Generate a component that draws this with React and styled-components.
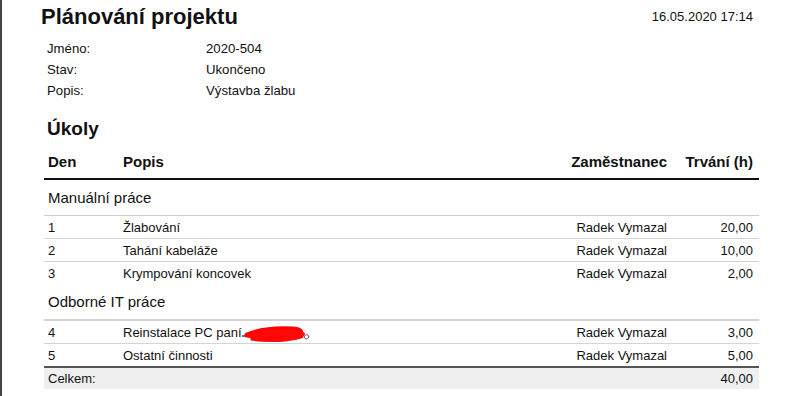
import React from 'react';
import styled, { createGlobalStyle } from 'styled-components';

const GlobalStyle = createGlobalStyle`
  html, body {
    margin: 0;
    padding: 0;
    background: #ffffff;
  }
  body {
    font-family: "Liberation Sans", Arial, sans-serif;
    color: #111111;
  }
`;

export const Sheet = styled.div`
  min-height: 396px;
  border-left: 2px solid #444444;
  box-sizing: border-box;
  width: 792px;
`;

export const Content = styled.div`
  width: 715px;
  margin-left: 42px;
`;

export const Header = styled.div`
  display: flex;
  justify-content: space-between;
  align-items: flex-start;
  padding-top: 3px;
  line-height: 28px;
`;

export const Titulo = styled.h1`
  margin: 0 0 0 -3px;
  font-size: 22px;
  font-weight: bold;
  line-height: 28px;
`;

export const Datum = styled.div`
  font-size: 13px;
  padding-right: 6px;
`;

export const Info = styled.div`
  display: grid;
  grid-template-columns: 159px 1fr;
  margin: 7px 0 0 3px;
  font-size: 13.2px;
  line-height: 21px;
`;

export const Podnadpis = styled.h2`
  margin: 17px 0 0 3px;
  font-size: 19px;
  font-weight: bold;
  line-height: 22px;
`;

export const Tabulka = styled.table`
  width: 715px;
  border-collapse: collapse;
  table-layout: fixed;
  font-size: 13px;
`;

export const Hlavicka = styled.th`
  font-size: 15px;
  font-weight: bold;
  line-height: 18px;
  padding: 13px 6px 7px 4px;
  text-align: ${(p) => (p.$right ? 'right' : 'left')};
  border-bottom: 2px solid #111111;
`;

export const Skupina = styled.td`
  font-size: 15px;
  line-height: 18px;
  padding: 9px 6px 8px 4px;
  border-bottom: ${(p) => (p.$heavy ? '2px solid #d2d2d2' : '1px solid #cccccc')};
`;

export const Bunka = styled.td`
  line-height: 20px;
  padding: 2px 6px 0 4px;
  text-align: ${(p) => (p.$right ? 'right' : 'left')};
  border-bottom: ${(p) => (p.$last ? 'none' : '1px solid #d4d4d4')};
`;

export const Souhrn = styled.td`
  line-height: 21px;
  padding: 0 6px 0 4px;
  background: #efefef;
  text-align: ${(p) => (p.$right ? 'right' : 'left')};
  border-top: 2px solid #555555;
`;

export const Zaciernit = styled.svg`
  vertical-align: middle;
  margin-left: -1px;
`;

function Redakce() {
  return (
    <Zaciernit width="72" height="18" viewBox="0 0 72 18">
      <path d="M1 11 L10 11" stroke="#333" strokeWidth="1.4" fill="none" />
      <path d="M68 12 q-2 -5 -5 0 q2 4 5 0" stroke="#555" strokeWidth="1" fill="none" />
      <path
        d="M6 10 C18 5 34 3 52 4 C62 5 62 8 50 9 C36 10 20 10 10 13 C24 15 42 14 60 11"
        stroke="#ff0000"
        strokeWidth="5"
        strokeLinecap="round"
        fill="none"
      />
      <path
        d="M12 8 C28 6 44 6 60 7 M16 14 C32 16 46 15 58 12 M8 11 C24 9 42 9 62 9"
        stroke="#ff0808"
        strokeWidth="4"
        strokeLinecap="round"
        fill="none"
      />
    </Zaciernit>
  );
}

const skupiny = [
  {
    nazev: 'Manuální práce',
    radky: [
      ['1', 'Žlabování', 'Radek Vymazal', '20,00'],
      ['2', 'Tahání kabeláže', 'Radek Vymazal', '10,00'],
      ['3', 'Krympování koncovek', 'Radek Vymazal', '2,00'],
    ],
  },
  {
    nazev: 'Odborné IT práce',
    heavy: true,
    radky: [
      ['4', 'Reinstalace PC paní', 'Radek Vymazal', '3,00'],
      ['5', 'Ostatní činnosti', 'Radek Vymazal', '5,00'],
    ],
  },
];

export default function App() {
  return (
    <Sheet>
      <GlobalStyle />
      <Content>
        <Header>
          <Titulo>Plánování projektu</Titulo>
          <Datum>16.05.2020 17:14</Datum>
        </Header>

        <Info>
          <span>Jméno:</span>
          <span>2020-504</span>
          <span>Stav:</span>
          <span>Ukončeno</span>
          <span>Popis:</span>
          <span>Výstavba žlabu</span>
        </Info>

        <Podnadpis>Úkoly</Podnadpis>

        <Tabulka>
          <colgroup>
            <col style={{ width: 75 }} />
            <col style={{ width: 395 }} />
            <col style={{ width: 159 }} />
            <col style={{ width: 86 }} />
          </colgroup>
          <thead>
            <tr>
              <Hlavicka>Den</Hlavicka>
              <Hlavicka>Popis</Hlavicka>
              <Hlavicka $right>Zaměstnanec</Hlavicka>
              <Hlavicka $right>Trvání (h)</Hlavicka>
            </tr>
          </thead>
          <tbody>
            {skupiny.map((s) => (
              <React.Fragment key={s.nazev}>
                <tr>
                  <Skupina colSpan={4} $heavy={s.heavy}>{s.nazev}</Skupina>
                </tr>
                {s.radky.map((r, i) => {
                  const last = i === s.radky.length - 1;
                  return (
                    <tr key={r[0]}>
                      <Bunka $last={last}>{r[0]}</Bunka>
                      <Bunka $last={last}>
                        {r[1]}
                        {r[0] === '4' && <Redakce />}
                      </Bunka>
                      <Bunka $last={last} $right>{r[2]}</Bunka>
                      <Bunka $last={last} $right>{r[3]}</Bunka>
                    </tr>
                  );
                })}
              </React.Fragment>
            ))}
            <tr>
              <Souhrn colSpan={3}>Celkem:</Souhrn>
              <Souhrn $right>40,00</Souhrn>
            </tr>
          </tbody>
        </Tabulka>
      </Content>
    </Sheet>
  );
}
